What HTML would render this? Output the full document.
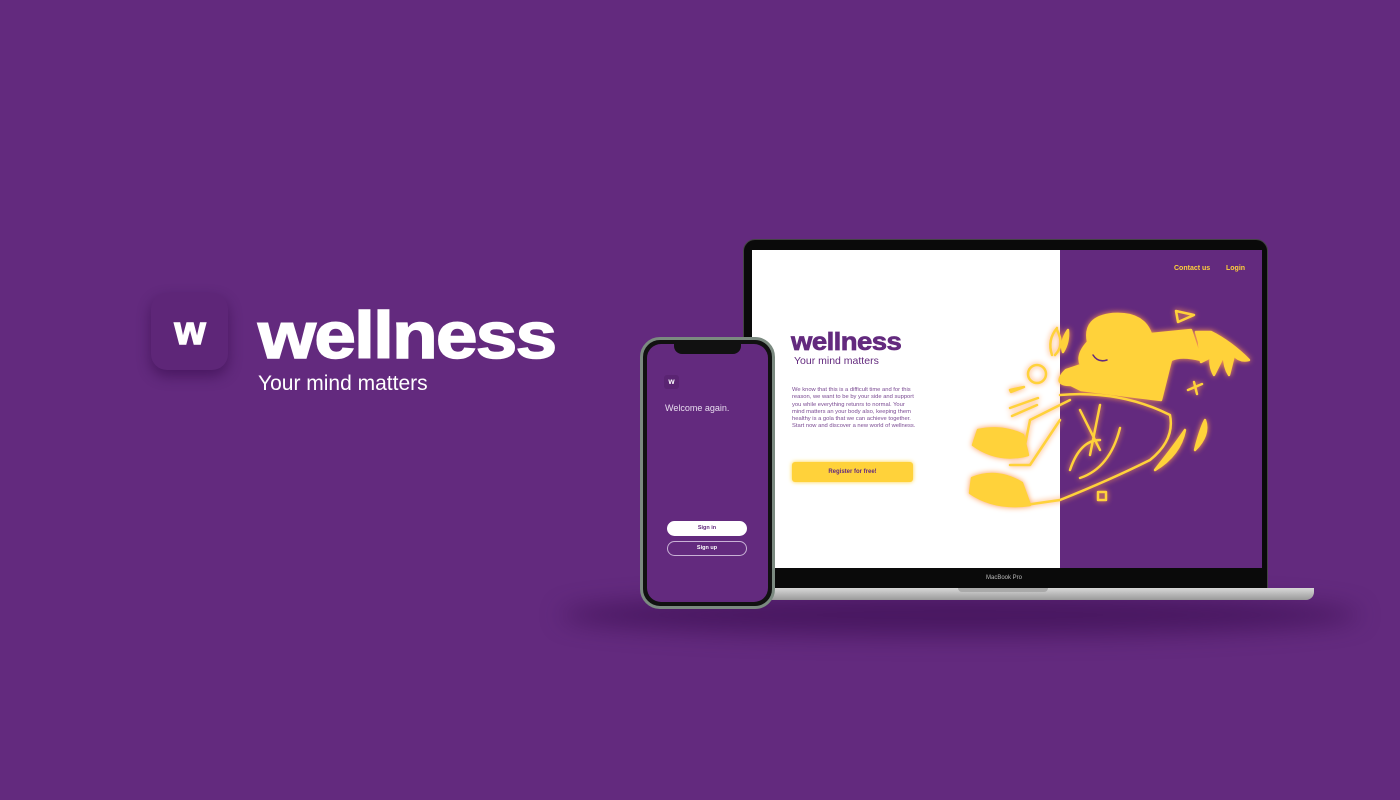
<!DOCTYPE html>
<html><head><style>
*{margin:0;padding:0;box-sizing:border-box}
body{width:1400px;height:800px;background:#632a7e;position:relative;overflow:hidden;font-family:"Liberation Sans",sans-serif}
.a{position:absolute}
</style></head><body>
<div class="a" style="left:151px;top:293px;width:77px;height:77px;border-radius:16px;background:#5e2678;box-shadow:0 6px 14px rgba(40,0,60,.45)"></div>
<div class="a" style="left:151px;top:309px;width:77px;text-align:center;color:#fff;font-weight:900;font-size:40px;letter-spacing:-1px;-webkit-text-stroke:1.5px #fff">w</div>
<div class="a" style="left:258px;top:297px;color:#fff;font-weight:900;font-size:66px;letter-spacing:-1.5px;transform:scaleX(1.13);transform-origin:left;-webkit-text-stroke:1.5px #fff">wellness</div>
<div class="a" style="left:258px;top:372px;color:#fff;font-size:21px">Your mind matters</div>

<div class="a" style="left:560px;top:595px;width:800px;height:40px;border-radius:50%;background:rgba(40,0,60,.45);filter:blur(12px)"></div>
<!-- laptop -->
<div class="a" style="left:743px;top:239px;width:525px;height:350px;background:#0a0a0a;border-radius:12px 12px 0 0;border:1px solid #444"></div>
<div class="a" style="left:752px;top:250px;width:308px;height:318px;background:#fff"></div>
<div class="a" style="left:1060px;top:250px;width:202px;height:318px;background:#632a7e"></div>
<div class="a" style="left:735px;top:588px;width:579px;height:12px;background:linear-gradient(#d8d8d8,#9a9a9a);border-radius:0 0 8px 8px"></div>
<div class="a" style="left:958px;top:588px;width:90px;height:4px;background:#aaa;border-radius:0 0 4px 4px"></div>
<div class="a" style="left:986px;top:575px;color:#bbb;font-size:6px">MacBook Pro</div>
<div class="a" style="left:1174px;top:265px;color:#ffd23a;font-size:7px;font-weight:bold">Contact us</div>
<div class="a" style="left:1226px;top:265px;color:#ffd23a;font-size:7px;font-weight:bold">Login</div>
<div class="a" style="left:791px;top:328px;color:#632a7e;font-weight:900;font-size:25px;letter-spacing:-0.5px;transform:scaleX(1.1);transform-origin:left;-webkit-text-stroke:0.7px #632a7e">wellness</div>
<div class="a" style="left:794px;top:355px;color:#632a7e;font-size:10.5px">Your mind matters</div>
<div class="a" style="left:792px;top:387px;width:124px;color:#7a4a92;font-size:5.8px;line-height:7.3px">We know that this is a difficult time and for this reason, we want to be by your side and support you while everything retunrs to normal. Your mind matters an your body also, keeping them healthy is a gola that we can achieve together. Start now and discover a new world of wellness.</div>
<div class="a" style="left:792px;top:462px;width:121px;height:20px;background:#ffd23a;border-radius:3px;box-shadow:0 0 4px #ffd23a;color:#632a7e;font-size:6px;font-weight:bold;text-align:center;line-height:20px">Register for free!</div>
<svg class="a" style="left:960px;top:300px;filter:drop-shadow(0 0 3px #ff9a50)" width="300" height="210" viewBox="0 0 300 210" fill="none" stroke="#ffd23a" stroke-width="2.5" stroke-linecap="round" stroke-linejoin="round">
<circle cx="77" cy="74" r="9"/>
<path d="M50 90 l14 -3 l-13 5z"/>
<path d="M50 108 l28 -10 M52 116 l25 -11"/>
<path d="M92 55 q-5 -15 5 -27 M95 55 q10 -10 2 -25" />
<path d="M108 30 q-8 12 -5 22 q6 -10 5 -22z" fill="#ffd23a"/>
<path d="M128 42 q-5 -25 25 -28 q30 -2 38 20 l40 -4 l10 30 q-20 -5 -30 0 l-10 40 q-40 -5 -80 -10 l-10 -5 q-20 0 -5 -15 l15 -5 q-5 -10 7 -23z" fill="#ffd23a"/>
<path d="M133 55 q5 8 14 5" stroke="#632a7e" stroke-width="1.5"/>
<path d="M236 32 l15 0 q20 10 38 28 q-10 2 -15 -5 l-5 20 q-5 -8 -5 -20 l-10 20 q-5 -10 -3 -18 l-10 5 l-2 -20z" fill="#ffd23a"/>
<path d="M228 90 l14 -6 M234 82 l3 12"/>
<path d="M216 11 l18 4 l-16 7z"/>
<path d="M100 95 q60 -5 110 20 q5 25 -20 45 q-40 20 -90 40 l-35 5"/>
<path d="M110 100 l-40 20 l-5 25 l-35 -10 M100 120 l-30 45 l-20 0"/>
<path d="M160 128 q-10 40 -40 50 M110 170 q10 -30 30 -30 M120 110 l20 40 M140 105 l-10 50"/>
<path d="M18 130 q25 -5 45 5 l5 20 q-30 8 -55 -10z" fill="#ffd23a"/>
<path d="M12 178 q25 -10 50 5 l8 22 q-35 5 -60 -12z" fill="#ffd23a"/>
<path d="M195 170 q20 -25 30 -40 q-5 25 -30 40z" fill="#ffd23a"/>
<path d="M235 150 q5 -20 10 -30 q5 15 -10 30z" fill="#ffd23a"/>
<rect x="138" y="192" width="8" height="8"/>
</svg>

<!-- phone -->
<div class="a" style="left:640px;top:337px;width:135px;height:272px;border-radius:20px;background:#111;border:3px solid #7b8a80"></div>
<div class="a" style="left:647px;top:344px;width:121px;height:258px;border-radius:14px;background:#632a7e"></div>
<div class="a" style="left:674px;top:344px;width:67px;height:10px;background:#111;border-radius:0 0 8px 8px"></div>
<div class="a" style="left:664px;top:375px;width:15px;height:14px;background:#5a2472;border-radius:3px;color:#fff;font-size:8px;font-weight:900;text-align:center;line-height:14px">w</div>
<div class="a" style="left:665px;top:403px;color:#e8dcef;font-size:9px">Welcome again.</div>
<div class="a" style="left:667px;top:521px;width:80px;height:15px;background:#fff;border-radius:8px;color:#632a7e;font-size:5.5px;font-weight:bold;text-align:center;line-height:15px">Sign in</div>
<div class="a" style="left:667px;top:541px;width:80px;height:15px;border:1px solid #c9b2d6;border-radius:8px;color:#fff;font-size:5.5px;font-weight:bold;text-align:center;line-height:13px">Sign up</div>
</body></html>
